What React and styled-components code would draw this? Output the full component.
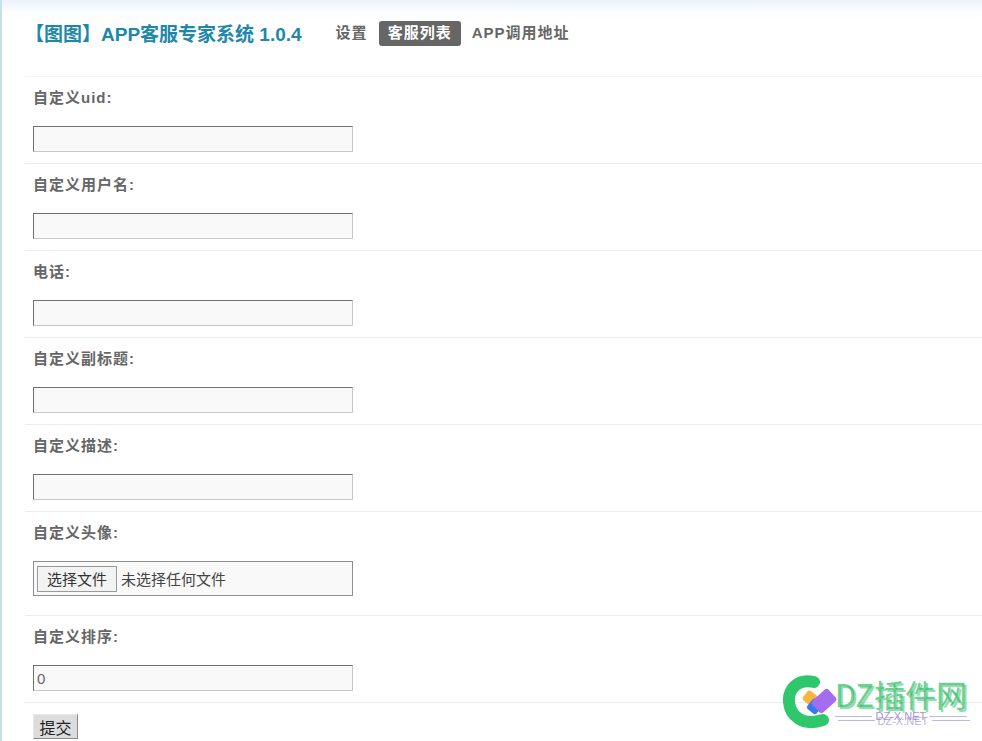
import React from 'react';
import styled, { createGlobalStyle } from 'styled-components';

const GlobalStyle = createGlobalStyle`
  html, body {
    margin: 0;
    padding: 0;
    background: #fff;
    font-family: "Liberation Sans", "Noto Sans CJK SC", sans-serif;
  }
`;

const Page = styled.div`
  position: relative;
  height: 741px;
  overflow: hidden;
  box-sizing: border-box;
  padding-left: 23px;
  border-left: 2px solid #c9dfe8;
  background: linear-gradient(to bottom, #eaf3fb 0, #fbfdfe 12px, #fff 20px);
`;

const Header = styled.div`
  display: flex;
  align-items: center;
  height: 76px;
  padding-bottom: 10px;
  box-sizing: border-box;
`;

const Title = styled.h1`
  margin: -2px 25px 0 0;
  font-size: 19px;
  font-weight: 700;
  color: #1d88a9;
  white-space: nowrap;
`;

const Nav = styled.div`
  display: flex;
  align-items: center;
  gap: 2px;
`;

const NavItem = styled.a`
  padding: 0 9px;
  height: 25px;
  line-height: 24px;
  font-size: 15px;
  font-weight: 700;
  letter-spacing: 1px;
  border-radius: 3px;
  white-space: nowrap;
  color: ${p => (p.$active ? '#fff' : '#666')};
  background: ${p => (p.$active ? '#666' : 'transparent')};
`;

const Row = styled.div`
  box-sizing: border-box;
  height: ${p => p.$height || 87}px;
  padding-left: 8px;
  border-top: 1px solid ${p => (p.$faint ? '#f3f6f6' : '#e8eff0')};
`;

const Label = styled.div`
  height: 49px;
  line-height: 42px;
  font-size: 15px;
  font-weight: 700;
  letter-spacing: 1px;
  color: #666;
`;

const TextInput = styled.input`
  display: block;
  box-sizing: border-box;
  width: 320px;
  height: 26px;
  padding: 0 3px;
  font-family: inherit;
  font-size: 15px;
  color: #666;
  background: #f9f9f9;
  border-style: solid;
  border-width: 1px;
  border-color: #707070 #c8c8c8 #c8c8c8 #707070;
  border-radius: 0;
  outline: none;
`;

const FileField = styled.div`
  display: flex;
  align-items: center;
  box-sizing: border-box;
  width: 320px;
  height: 35px;
  padding-left: 3px;
  gap: 4px;
  background: #f9f9f9;
  border: 1px solid #8e8e8e;
`;

const FileButton = styled.button`
  box-sizing: border-box;
  width: 80px;
  height: 26px;
  padding: 0;
  font-family: inherit;
  font-size: 15px;
  color: #333;
  background: #f3f3f3;
  border: 1px solid #9a9a9a;
`;

const FileName = styled.span`
  font-size: 15px;
  color: #444;
`;

const SubmitRow = styled.div`
  border-top: 1px solid #e8eff0;
  padding: 11px 0 0 8px;
`;

const SubmitButton = styled.button`
  box-sizing: border-box;
  width: 45px;
  height: 25px;
  padding: 0;
  font-family: inherit;
  font-size: 16px;
  color: #222;
  background: #dcdcdc;
  border-style: solid;
  border-width: 1px;
  border-color: #e8e8e8 #8a8a8a #8a8a8a #e8e8e8;
`;

// site watermark sitting over the bottom right corner
const Watermark = styled.div`
  position: absolute;
  right: 15px;
  bottom: 10px;
  display: flex;
  align-items: flex-start;
  pointer-events: none;
`;

const LogoMark = styled.svg`
  flex: none;
`;

const BrandBlock = styled.div`
  display: flex;
  flex-direction: column;
  margin: 3px 0 0 -3px;
`;

const Brand = styled.span`
  font-size: 31px;
  line-height: 36px;
  font-family: "Noto Sans CJK SC", sans-serif;
  white-space: nowrap;
  color: rgba(52, 190, 105, 0.72);
  text-shadow: 2px 2px 0 rgba(52, 190, 105, 0.55);
`;

const Caption = styled.div`
  display: flex;
  align-items: center;
  gap: 3px;
  margin-top: -1px;
  font-size: 11px;
  line-height: 10px;
  color: rgba(140, 120, 200, 0.8);
  text-shadow: 2px 5px 0 rgba(140, 120, 200, 0.6);

  &::before,
  &::after {
    content: "";
    flex: 1;
    height: 1px;
    background: rgba(170, 150, 215, 0.7);
    box-shadow: 3px 4px 0 rgba(170, 150, 215, 0.7);
  }
`;

const fields = [
  { label: '自定义uid:' },
  { label: '自定义用户名:' },
  { label: '电话:' },
  { label: '自定义副标题:' },
  { label: '自定义描述:' },
];

export default function App() {
  return (
    <>
      <GlobalStyle />
      <Page>
        <Header>
          <Title>【图图】APP客服专家系统 1.0.4</Title>
          <Nav>
            <NavItem>设置</NavItem>
            <NavItem $active>客服列表</NavItem>
            <NavItem>APP调用地址</NavItem>
          </Nav>
        </Header>

        {fields.map(f => (
          <Row key={f.label} $faint={f.label === '自定义uid:'}>
            <Label>{f.label}</Label>
            <TextInput type="text" />
          </Row>
        ))}

        <Row $height={104}>
          <Label>自定义头像:</Label>
          <FileField>
            <FileButton type="button">选择文件</FileButton>
            <FileName>未选择任何文件</FileName>
          </FileField>
        </Row>

        <Row>
          <Label>自定义排序:</Label>
          <TextInput type="text" defaultValue="0" />
        </Row>

        <SubmitRow>
          <SubmitButton type="button">提交</SubmitButton>
        </SubmitRow>

        <Watermark>
          <LogoMark width="56" height="58" viewBox="0 0 56 58">
            <path
              d="M 32 9 C 14 5 6 18 7 29 C 8 42 20 54 41 47"
              fill="none"
              stroke="#2fc76c"
              strokeWidth="12"
              strokeLinecap="round"
            />
            <rect x="22" y="19" width="12" height="12" rx="3" fill="#f6b73c" transform="rotate(40 28 25)" />
            <rect x="27" y="27" width="12" height="13" rx="3" fill="#2f7df0" transform="rotate(40 33 33)" />
            <rect x="34" y="17" width="16" height="22" rx="3" fill="#a56cf0" transform="rotate(48 42 28)" />
          </LogoMark>
          <BrandBlock>
            <Brand>DZ插件网</Brand>
            <Caption>DZ-X.NET</Caption>
          </BrandBlock>
        </Watermark>
      </Page>
    </>
  );
}
